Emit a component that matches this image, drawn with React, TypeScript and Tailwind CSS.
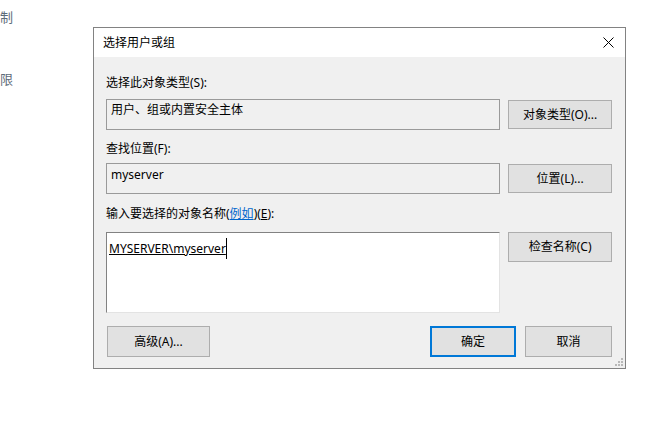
export default function App() {
  const font = "font-['Segoe_UI','Noto_Sans','Noto_Sans_CJK_SC',sans-serif]";

  return (
    <div className={`relative w-[671px] h-[423px] overflow-hidden bg-white text-[12px] leading-[16px] text-black ${font}`}>
      {/* page behind the dialog */}
      <div className="flex flex-col text-[13px] text-[#5d6b7a]">
        <span className="mt-[9px]">制</span>
        <span className="mt-[46px]">限</span>
      </div>

      {/* dialog window */}
      <div className="absolute left-[93px] top-[27px] w-[533px] h-[342px] border border-[#828282] flex flex-col bg-[#f0f0f0]">
        {/* Title bar */}
        <div className="h-[29px] bg-white flex items-center justify-between pl-[9px] pr-[10px]">
          <span className="pt-[1px]">选择用户或组</span>
          <svg width="11" height="11" viewBox="0 0 11 11" className="mr-[1px]">
            <path d="M0.5 0.5L10.5 10.5M10.5 0.5L0.5 10.5" stroke="#000" strokeWidth="1" />
          </svg>
        </div>

        {/* Body */}
        <div className="flex-1 flex flex-col pl-[12px] pr-[13px] pt-[18px]">
          <div>选择此对象类型(S):</div>
          <div className="flex gap-[8px] mt-[8px] items-start">
            <div className="w-[395px] h-[31px] border border-[#9a9a9a] pl-[4px] pt-[2px]">用户、组或内置安全主体</div>
            <button className="mt-[1px] w-[104px] h-[29px] bg-[#e1e1e1] border border-[#adadad] flex items-center justify-center">
              对象类型(O)...
            </button>
          </div>

          <div className="mt-[11px]">查找位置(F):</div>
          <div className="flex gap-[8px] mt-[6px] items-start">
            <div className="w-[395px] h-[31px] border border-[#9a9a9a] pl-[4px] pt-[3px]">myserver</div>
            <button className="mt-[1px] w-[104px] h-[29px] bg-[#e1e1e1] border border-[#adadad] flex items-center justify-center">
              位置(L)...
            </button>
          </div>

          <div className="mt-[12px]">
            输入要选择的对象名称(<span className="text-[#0066cc] underline">例如</span>)(<span className="underline">E</span>):
          </div>
          <div className="flex gap-[8px] mt-[10px] items-start">
            <div className="w-[395px] h-[81px] bg-white border border-t-[#828282] border-l-[#828282] border-r-[#e3e3e3] border-b-[#e3e3e3] pl-[2px] pt-[5px]">
              <div className="flex items-center">
                <span className="underline">MYSERVER\myserver</span>
                <span className="inline-block w-[1px] h-[21px] bg-black" />
              </div>
            </div>
            <button className="w-[104px] h-[30px] bg-[#e1e1e1] border border-[#adadad] flex items-center justify-center">
              检查名称(C)
            </button>
          </div>

          <div className="flex items-start mt-[13px]">
            <button className="ml-[1px] w-[103px] h-[31px] bg-[#e1e1e1] border border-[#adadad] flex items-center justify-center">
              高级(A)...
            </button>
            <div className="flex-1" />
            <button className="w-[86px] h-[31px] bg-[#e1e1e1] border-2 border-[#0078d7] flex items-center justify-center">
              确定
            </button>
            <button className="ml-[9px] w-[87px] h-[31px] bg-[#e1e1e1] border border-[#adadad] flex items-center justify-center">
              取消
            </button>
          </div>
        </div>

        {/* resize grip */}
        <svg width="8" height="8" viewBox="0 0 8 8" className="absolute right-[2px] bottom-[2px]">
          <rect x="6" y="0" width="2" height="2" fill="#b8b8b8" />
          <rect x="3" y="3" width="2" height="2" fill="#b8b8b8" />
          <rect x="6" y="3" width="2" height="2" fill="#b8b8b8" />
          <rect x="0" y="6" width="2" height="2" fill="#b8b8b8" />
          <rect x="3" y="6" width="2" height="2" fill="#b8b8b8" />
          <rect x="6" y="6" width="2" height="2" fill="#b8b8b8" />
        </svg>
      </div>
    </div>
  );
}
